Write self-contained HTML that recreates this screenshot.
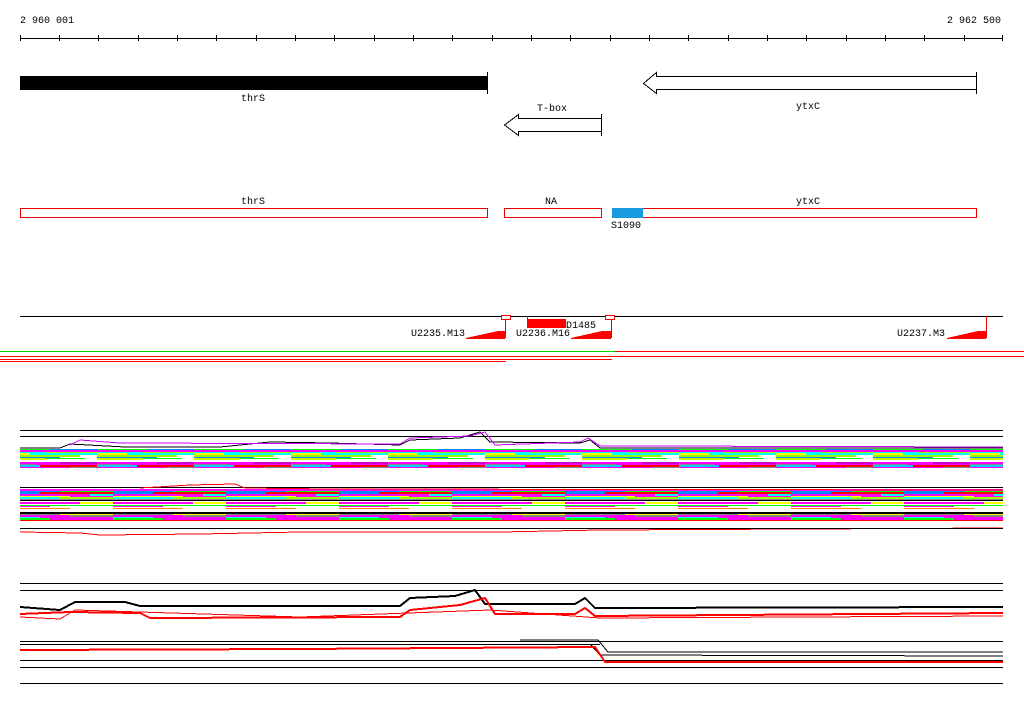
<!DOCTYPE html>
<html><head><meta charset="utf-8"><style>
html,body{margin:0;padding:0;background:#fff;width:1024px;height:714px;overflow:hidden}
svg{display:block}
text{font-family:"Liberation Mono","DejaVu Sans Mono",monospace;font-size:10px;fill:#000}
</style></head><body>
<svg width="1024" height="714" viewBox="0 0 1024 714" shape-rendering="crispEdges">
<defs>
<pattern id="b1" width="97" height="22" patternUnits="userSpaceOnUse">
<rect width="97" height="22" fill="#fff"/>
<rect y="0" width="60" height="2" fill="#f0f"/><rect x="60" y="0" width="37" height="2" fill="#c0c"/>
<rect y="2" width="35" height="1" fill="#888"/><rect x="35" y="2" width="62" height="1" fill="#f0f"/>
<rect y="3" width="40" height="2" fill="#0cf"/><rect x="40" y="3" width="57" height="2" fill="#f00"/>
<rect y="5" width="70" height="2" fill="#f0f"/><rect x="70" y="5" width="27" height="2" fill="#888"/>
<rect y="7" width="55" height="1" fill="#08f"/><rect x="55" y="7" width="42" height="1" fill="#0f0"/>
<rect y="8" width="50" height="2" fill="#0f0"/><rect x="50" y="8" width="47" height="2" fill="#08f"/>
<rect y="10" width="97" height="2" fill="#f0f"/>
<rect y="12" width="45" height="1" fill="#0ff"/><rect x="45" y="12" width="52" height="1" fill="#9f0"/>
<rect y="13" width="30" height="2" fill="#ff0"/><rect x="30" y="13" width="67" height="2" fill="#0ff"/>
<rect y="15" width="80" height="2" fill="#9f0"/>
<rect y="17" width="60" height="1" fill="#08f"/>
<rect y="18" width="45" height="2" fill="#cf0"/><rect x="45" y="18" width="40" height="1" fill="#0f0"/>
</pattern>
<pattern id="b2" width="113" height="32" patternUnits="userSpaceOnUse">
<rect width="113" height="32" fill="#fff"/>
<rect y="0" width="113" height="2" fill="#000"/>
<rect y="2" width="60" height="1" fill="#888"/><rect x="60" y="2" width="53" height="1" fill="#ff0"/>
<rect y="3" width="70" height="2" fill="#f0f"/><rect x="70" y="3" width="43" height="2" fill="#888"/>
<rect y="5" width="40" height="1" fill="#0ff"/><rect x="40" y="5" width="73" height="1" fill="#f0f"/>
<rect y="6" width="50" height="2" fill="#0f0"/><rect x="50" y="6" width="63" height="2" fill="#f0f"/>
<rect y="8" width="113" height="1" fill="#f00"/>
<rect y="9" width="113" height="2" fill="#f0f"/>
<rect y="11" width="60" height="1" fill="#08f"/><rect x="60" y="11" width="53" height="1" fill="#0f0"/>
<rect y="12" width="40" height="2" fill="#08f"/><rect x="40" y="12" width="73" height="2" fill="#f00"/>
<rect y="14" width="90" height="2" fill="#f0f"/><rect x="90" y="14" width="23" height="2" fill="#0ff"/>
<rect y="16" width="70" height="1" fill="#ff0"/><rect x="70" y="16" width="43" height="1" fill="#f0f"/>
<rect y="17" width="60" height="2" fill="#0ff"/><rect x="60" y="17" width="53" height="2" fill="#9f0"/>
<rect y="19" width="113" height="1" fill="#888"/>
<rect y="20" width="113" height="1" fill="#000"/>
<rect y="22" width="80" height="2" fill="#f0f"/><rect x="80" y="22" width="33" height="2" fill="#ff0"/>
<rect y="25" width="113" height="1" fill="#0f0"/>
<rect y="26" width="50" height="1" fill="#f0f"/>
<rect y="28" width="70" height="1" fill="#f80"/>
</pattern>
</defs>
<!-- ruler -->
<text x="20" y="23">2 960 001</text>
<text x="947" y="23">2 962 500</text>
<line x1="20" y1="38.5" x2="1003" y2="38.5" stroke="#000"/>
<g stroke="#000">
<path d="M20.5 35v6M59.5 35v6M98.5 35v6M138.5 35v6M177.5 35v6M216.5 35v6M256.5 35v6M295.5 35v6M334.5 35v6M374.5 35v6M413.5 35v6M452.5 35v6M492.5 35v6M531.5 35v6M570.5 35v6M610.5 35v6M649.5 35v6M688.5 35v6M728.5 35v6M767.5 35v6M806.5 35v6M846.5 35v6M885.5 35v6M924.5 35v6M964.5 35v6M1002.5 35v6"/>
</g>
<!-- genes -->
<rect x="20" y="76" width="467" height="14" fill="#000"/>
<line x1="487.5" y1="72" x2="487.5" y2="94" stroke="#000"/>
<text x="241" y="101">thrS</text>
<path d="M976.5 76.5H656.5V72.5L643.5 83.5L656.5 93.5V89.5H976.5Z" fill="#fff" stroke="#000"/>
<line x1="976.5" y1="72" x2="976.5" y2="94" stroke="#000"/>
<text x="796" y="109">ytxC</text>
<path d="M601.5 118.5H518.5V114.5L504.5 125L518.5 135.5V131.5H601.5Z" fill="#fff" stroke="#000"/>
<line x1="601.5" y1="114" x2="601.5" y2="136" stroke="#000"/>
<text x="537" y="111">T-box</text>
<!-- row2 -->
<g fill="#fff" stroke="#e00">
<rect x="20.5" y="208.5" width="467" height="9"/>
<rect x="504.5" y="208.5" width="97" height="9"/>
<rect x="612.5" y="208.5" width="364" height="9"/>
</g>
<rect x="612" y="208" width="31" height="10" fill="#1a9be0"/>
<text x="241" y="204">thrS</text><text x="545" y="204">NA</text><text x="796" y="204">ytxC</text>
<text x="611" y="228">S1090</text>
<!-- row3 -->
<line x1="20" y1="316.5" x2="1003" y2="316.5" stroke="#000"/>
<g stroke="#e00" fill="#fff">
<line x1="505.5" y1="316" x2="505.5" y2="338"/>
<line x1="611.5" y1="316" x2="611.5" y2="338"/>
<line x1="986.5" y1="316" x2="986.5" y2="338"/>
<rect x="501.5" y="315.5" width="9" height="4"/>
<rect x="605.5" y="315.5" width="9" height="4"/>
</g>
<line x1="527.5" y1="316" x2="527.5" y2="327" stroke="#e00"/>
<rect x="527" y="319" width="39" height="9" fill="#f00"/>
<text x="566" y="328">D1485</text>
<g fill="#f00">
<polygon points="466,339 505,339 505,331 498,331 466,338"/>
<polygon points="571,339 611,339 611,331 602,331 571,338"/>
<polygon points="947,339 986,339 986,331 978,331 947,338"/>
</g>
<text x="411" y="336">U2235.M13</text>
<text x="516" y="336">U2236.M16</text>
<text x="897" y="336">U2237.M3</text>
<rect x="0" y="351" width="615" height="1" fill="#0c0"/>
<rect x="615" y="351" width="409" height="1" fill="#f00"/>
<rect x="0" y="356" width="1024" height="1" fill="#f00"/>
<rect x="0" y="359" width="612" height="1" fill="#f00"/>
<rect x="0" y="361" width="506" height="1" fill="#f00"/>
<!-- panel 1 -->
<g stroke="#000" fill="none">
<line x1="20" y1="430.5" x2="1003" y2="430.5"/>
<line x1="20" y1="436.5" x2="1003" y2="436.5"/>
</g>
<rect x="20" y="449" width="983" height="19" fill="url(#b1)"/>
<polyline fill="none" stroke="#000" points="20,448 60,448 70,444 125,447 220,447 270,442 330,443 400,445 410,440 460,438 480,432 490,442 580,443 590,440 600,448 640,448 1003,448"/>
<polyline fill="none" stroke="#c0f" points="70,445 80,440 120,443 400,444 410,438 470,436 485,432 495,445 580,442 588,438 600,446 640,446 1003,447"/>
<rect x="20" y="487" width="983" height="1" fill="#000"/>
<rect x="20" y="489" width="983" height="32" fill="url(#b2)"/>
<polyline fill="none" stroke="#f00" points="20,532 80,533 100,535 200,534 300,532 500,532 600,530 1003,528"/>
<line x1="20" y1="528.5" x2="1003" y2="528.5" stroke="#000"/>
<polyline fill="none" stroke="#f00" points="140,488 190,485 235,484 245,488 330,489 1003,490"/>
<!-- panel 2 -->
<g stroke="#000" fill="none">
<line x1="20" y1="583.5" x2="1003" y2="583.5"/>
<line x1="20" y1="590.5" x2="1003" y2="590.5"/>
<polyline stroke-width="2" points="20,607 60,610 75,602 125,602 140,606 400,606 410,598 455,596 475,590 485,604 575,604 585,598 595,608 1003,607"/>
<line x1="20" y1="641.5" x2="1003" y2="641.5"/>
<line x1="20" y1="644.5" x2="600" y2="644.5"/>
<polyline points="520,640 598,640 608,652 1003,652"/>
<polyline points="590,644 600,655 1003,656"/>
<line x1="20" y1="660.5" x2="1003" y2="660.5"/>
<line x1="20" y1="667.5" x2="1003" y2="667.5"/>
<line x1="20" y1="683.5" x2="1003" y2="683.5"/>
</g>
<g stroke="#f00" fill="none">
<polyline stroke-width="2" points="20,614 70,612 140,613 150,618 400,617 410,610 460,605 485,598 495,614 575,614 585,608 595,616 1003,613"/>
<polyline points="20,617 60,619 75,610 140,612 300,617 490,610 600,618 1003,616"/>
<polyline stroke-width="2" points="20,650 300,649 595,647 605,662 1003,662"/>
</g>
</svg>
</body></html>
